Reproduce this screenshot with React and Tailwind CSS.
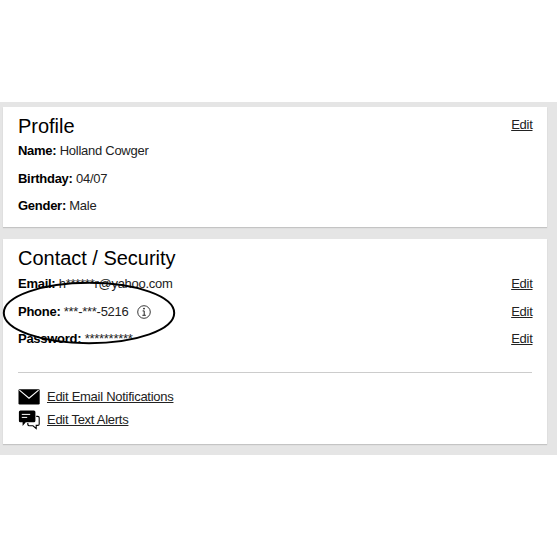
const EditLink = () => (
  <a href="#" className="-mr-[0.5px] underline underline-offset-[1px]">
    Edit
  </a>
);

const Row = ({ label, value, editable, children }) => (
  <div className="flex h-[27.5px] items-center justify-between">
    <div className="flex items-center whitespace-pre">
      <span className="font-bold text-black">{label}: </span>
      <span>{value}</span>
      {children}
    </div>
    {editable && <EditLink />}
  </div>
);

const InfoIcon = () => (
  <svg viewBox="0 0 14 14" className="ml-[9px] h-[14px] w-[14px]" fill="none" stroke="#222">
    <circle cx="7" cy="7" r="6.3" strokeWidth="0.9" />
    <path d="M5.6 5.9H7.2V10M5.4 10.3H8.8" strokeWidth="1" />
    <circle cx="7" cy="3.6" r="0.9" fill="#222" stroke="none" />
  </svg>
);

const MailIcon = () => (
  <svg viewBox="0 0 22 16" className="h-4 w-[22px]">
    <rect x="0.5" y="0.3" width="21.2" height="15.2" rx="1.2" fill="#000" />
    <path d="M1.4 1.2L11 9.2L20.6 1.2" fill="none" stroke="#fff" strokeWidth="1.1" />
  </svg>
);

const ChatIcon = () => (
  <svg viewBox="0 0 22 20" className="h-5 w-[22px]">
    <path
      d="M18.2 6.4H19.8Q21.2 6.4 21.2 7.8V14Q21.2 15.4 19.8 15.4H18.2V18.6L15 15.8H11Q9.6 15.6 9.8 13"
      fill="none"
      stroke="#000"
      strokeWidth="1.1"
    />
    <path
      d="M2.4 0.5H15.9Q17.4 0.5 17.4 2V10.8Q17.4 12.3 15.9 12.3H7.8L4.6 16V12.3H2.4Q0.9 12.3 0.9 10.8V2Q0.9 0.5 2.4 0.5Z"
      fill="#000"
    />
    <path d="M3.8 4.4H12.2M3.8 7.4H9.2" stroke="#fff" strokeWidth="1" />
  </svg>
);

const App = () => {
  return (
    <div className="h-[558px] w-[557px] bg-white pt-[102px] font-['Liberation_Sans',Arial,sans-serif] text-[13px] tracking-[-0.27px] text-[#222]">
      <div className="relative flex h-[353px] flex-col gap-3 bg-[#e5e5e5] pt-[5px] pr-[10px] pl-[3px]">
        {/* Profile */}
        <section className="h-[120px] bg-white px-[15px] pt-[5px] shadow-[0_1px_1px_#c4c4c4]">
          <div className="flex h-[26px] items-center justify-between">
            <h2 className="pt-px text-[20px] tracking-[-0.02px] text-black">Profile</h2>
            <EditLink />
          </div>
          <div className="-mt-[0.7px]">
            <Row label="Name" value="Holland Cowger" />
            <Row label="Birthday" value="04/07" />
            <Row label="Gender" value="Male" />
          </div>
        </section>

        {/* Contact / Security */}
        <section className="h-[205px] bg-white px-[15px] pt-[6px] shadow-[0_1px_1px_#c4c4c4]">
          <h2 className="flex h-[26px] items-center text-[20px] tracking-[-0.02px] text-black">Contact / Security</h2>
          <div className="-mt-[0.7px]">
            <Row label="Email" value="h******r@yahoo.com" editable />
            <Row label="Phone" value="***-***-5216" editable>
              <InfoIcon />
            </Row>
            <Row label="Password" value="**********" editable />
          </div>
          <hr className="mt-[18.7px] border-[#ccc]" />
          <div className="mt-[14px] flex h-[21px] items-center gap-[7px]">
            <MailIcon />
            <a href="#" className="underline underline-offset-[1px]">
              Edit Email Notifications
            </a>
          </div>
          <div className="mt-[2px] flex h-[21px] items-center gap-[7px]">
            <ChatIcon />
            <a href="#" className="underline underline-offset-[1px]">
              Edit Text Alerts
            </a>
          </div>
        </section>

        {/* hand-drawn highlight over the phone row */}
        <svg viewBox="0 0 174 64" className="absolute top-[179px] left-[2px] h-16 w-[174px]">
          <ellipse cx="87" cy="32" rx="85.2" ry="30.2" fill="none" stroke="#000" strokeWidth="2" />
        </svg>
      </div>
    </div>
  );
};

export default App;
